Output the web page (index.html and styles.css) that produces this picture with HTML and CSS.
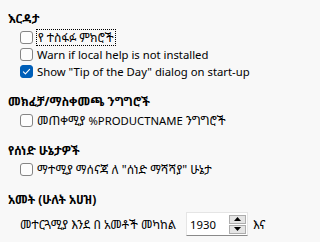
FILE: index.html
```html
<!DOCTYPE html>
<html lang="am">
<head>
<meta charset="utf-8">
<title>Options</title>
<link rel="stylesheet" href="styles.css">
</head>
<body>
<div class="page">
  <section class="group">
    <div class="heading">እርዳታ</div>
    <label class="row"><span class="box"></span><span class="text focus">የ ተስፋፉ ምክሮች</span></label>
    <label class="row"><span class="box"></span><span class="text latin">Warn if local help is not installed</span></label>
    <label class="row"><span class="box checked"><svg viewBox="0 0 13 13" width="13" height="13"><path d="M3.4 6.8 L5.4 8.8 L9.6 4.4" fill="none" stroke="#fff" stroke-width="1.1" stroke-linecap="round" stroke-linejoin="round"/></svg></span><span class="text latin">Show "Tip of the Day" dialog on start-up</span></label>
  </section>
  <section class="group">
    <div class="heading">መክፈቻ/ማስቀመጫ ንግግሮች</div>
    <label class="row"><span class="box"></span><span class="text">መጠቀሚያ <span class="latin">%PRODUCTNAME</span> ንግግሮች</span></label>
  </section>
  <section class="group">
    <div class="heading">የሰነድ ሁኔታዎች</div>
    <label class="row"><span class="box"></span><span class="text">ማተሚያ ማሰናጃ ለ "ሰነድ ማሻሻያ" ሁኔታ</span></label>
  </section>
  <section class="group">
    <div class="heading">አመት (ሁለት አሀዝ)</div>
    <div class="yearrow">
      <span class="text">መተርጓሚያ እንደ በ አመቶች መካከል</span>
      <div class="spin">
        <span class="value latin">1930</span>
        <div class="buttons">
          <span class="btn"><svg viewBox="0 0 7 4" width="7" height="4"><path d="M0 4 L3.5 0 L7 4 Z" fill="#000"/></svg></span>
          <span class="btn"><svg viewBox="0 0 7 4" width="7" height="4"><path d="M0 0 L3.5 4 L7 0 Z" fill="#000"/></svg></span>
        </div>
      </div>
      <span class="text">እና</span>
    </div>
  </section>
</div>
</body>
</html>
```
FILE: styles.css
```css
html, body {
  margin: 0;
  padding: 0;
  background: #f8f8f8;
}
body {
  font-family: "Noto Sans", "Noto Sans Ethiopic", "DejaVu Sans", sans-serif;
  font-size: 12px;
  color: #000;
  width: 284px;
  height: 242px;
  overflow: hidden;
}
.page {
  display: flex;
  flex-direction: column;
  padding: 10px 0 0 8px;
}
.group {
  display: flex;
  flex-direction: column;
  margin-bottom: 13px;
}
.heading {
  font-weight: bold;
  line-height: 17px;
  height: 17px;
  margin-bottom: 2px;
}
.row {
  display: flex;
  align-items: center;
  height: 17px;
  padding-left: 12px;
}
.box {
  box-sizing: border-box;
  width: 13px;
  height: 13px;
  border: 1px solid #858585;
  border-radius: 3px;
  background: #fdfdfd;
  margin-right: 4px;
  flex: none;
  display: flex;
}
.box.checked {
  background: #005fb8;
  border-color: #005fb8;
}
.box.checked svg {
  margin: -1px;
}
.text {
  line-height: 15px;
  white-space: nowrap;
}
.latin {
  font-size: 11.3px;
}
.focus {
  outline: 1px dotted #000;
  padding: 0 1px;
}
.yearrow {
  display: flex;
  align-items: center;
  padding-left: 12px;
  margin-top: 2px;
}
.spin {
  box-sizing: border-box;
  width: 62px;
  height: 24px;
  margin-left: 10px;
  margin-right: 5px;
  background: #fff;
  border: 1px solid #e5e5e5;
  border-bottom-color: #8a8a8a;
  display: flex;
  align-items: center;
  justify-content: space-between;
  padding: 0 1px 0 3px;
}
.value {
  line-height: 15px;
}
.buttons {
  display: flex;
  flex-direction: column;
  gap: 1px;
}
.btn {
  box-sizing: border-box;
  width: 17px;
  height: 9px;
  background: #e5e5e5;
  border: 1px solid #adadad;
  display: flex;
  align-items: center;
  justify-content: center;
}
```
